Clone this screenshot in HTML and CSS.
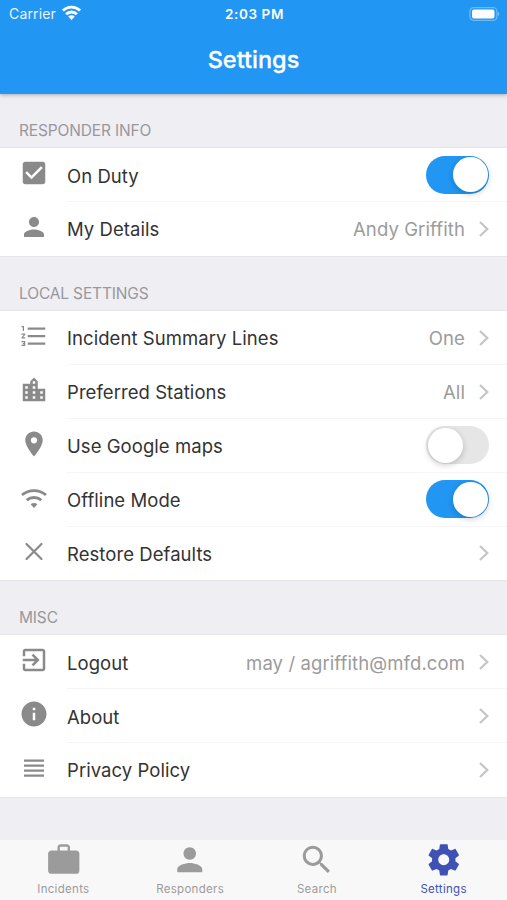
FILE: index.html
```html
<!DOCTYPE html>
<html lang="en">
<head>
<meta charset="utf-8">
<title>Settings</title>
<link rel="stylesheet" href="styles.css">
</head>
<body>
<svg width="0" height="0" class="defs">
  <symbol id="chevron" viewBox="0 0 10 16"><path d="M1 1l7.300 7L1 15" fill="none" stroke="currentColor" stroke-width="2.200"/></symbol>
  <symbol id="person" viewBox="0 0 24 24"><path d="M12 12c2.210 0 4-1.790 4-4s-1.790-4-4-4-4 1.790-4 4 1.790 4 4 4zm0 2c-2.670 0-8 1.340-8 4v2h16v-2c0-2.660-5.330-4-8-4z"/></symbol>
</svg>
<header class="header">
  <div class="status">
    <div class="carrier"><span>Carrier</span>
      <svg class="signal" viewBox="0 0 18 14"><g fill="none" stroke="#fff" stroke-width="2.700"><path d="M.9 5.200a11.500 11.500 0 0 1 16.200 0"/><path d="M3.900 8.600a7.200 7.200 0 0 1 10.200 0"/></g><path d="M5.900 10.900a4.300 4.300 0 0 1 6.200 0L9 14z" fill="#fff"/></svg>
    </div>
    <div class="clock">2:03 PM</div>
    <svg class="battery" viewBox="0 0 31 14"><rect x=".9" y=".6" width="27" height="12.800" rx="3.800" fill="none" stroke="#fff" stroke-opacity=".35" stroke-width="1.200"/><rect x="3" y="2.500" width="22.500" height="9" rx="2" fill="#fff"/><path d="M28.800 5v4c2-.7 2-3.300 0-4z" fill="#fff" fill-opacity=".4"/></svg>
  </div>
  <h1 class="title">Settings</h1>
</header>
<main class="content">
  <h2 class="heading">RESPONDER INFO</h2>
  <section class="group">
    <div class="row"><svg class="icon" viewBox="0 0 24 24"><path d="M19 3H5c-1.110 0-2 .9-2 2v14c0 1.100.89 2 2 2h14c1.110 0 2-.9 2-2V5c0-1.100-.89-2-2-2zm-9 14l-5-5 1.410-1.410L10 14.170l7.590-7.590L19 8l-9 9z"/></svg>
      <div class="body"><span class="label">On Duty</span><span class="toggle on"><i class="knob"></i></span></div></div>
    <div class="row"><svg class="icon"><use href="#person"/></svg>
      <div class="body"><span class="label">My Details</span><span class="value">Andy Griffith</span><svg class="chev"><use href="#chevron"/></svg></div></div>
  </section>
  <h2 class="heading local">LOCAL SETTINGS</h2>
  <section class="group">
    <div class="row"><svg class="icon" viewBox="0 0 24 24"><path d="M2 17h2v.5H3v1h1v.5H2v1h3v-4H2v1zm1-9h1V4H2v1h1v3zm-1 3h1.800L2 13.100v.9h3v-1H3.200L5 10.900V10H2v1zm5-5.900v1.800h14V5.100H7zm0 13.800h14v-1.800H7v1.800zm0-6h14v-1.800H7v1.800z"/></svg>
      <div class="body"><span class="label">Incident Summary Lines</span><span class="value">One</span><svg class="chev"><use href="#chevron"/></svg></div></div>
    <div class="row"><svg class="icon" viewBox="0 0 24 24"><path d="M15 11V5l-3-3-3 3v2H3v14h18V11h-6zm-8 8H5v-2h2v2zm0-4H5v-2h2v2zm0-4H5V9h2v2zm6 8h-2v-2h2v2zm0-4h-2v-2h2v2zm0-4h-2V9h2v2zm0-4h-2V5h2v2zm6 12h-2v-2h2v2zm0-4h-2v-2h2v2z"/></svg>
      <div class="body"><span class="label">Preferred Stations</span><span class="value">All</span><svg class="chev"><use href="#chevron"/></svg></div></div>
    <div class="row"><svg class="icon" viewBox="0 0 24 24"><path d="M12 2C8.130 2 5 5.130 5 9c0 5.250 7 13 7 13s7-7.750 7-13c0-3.870-3.130-7-7-7zm0 9.500a2.500 2.500 0 0 1 0-5 2.500 2.500 0 0 1 0 5z"/></svg>
      <div class="body"><span class="label">Use Google maps</span><span class="toggle"><i class="knob"></i></span></div></div>
    <div class="row"><svg class="icon" viewBox="0 0 30 30"><g fill="none" stroke="currentColor" stroke-width="2.900"><path d="M3 12a18.500 18.500 0 0 1 24 0"/><path d="M7.700 17.100a11.600 11.600 0 0 1 14.600 0"/></g><path d="M11.600 21.300c2-1.600 4.800-1.600 6.800 0L15 24.900z"/></svg>
      <div class="body"><span class="label">Offline Mode</span><span class="toggle on"><i class="knob"></i></span></div></div>
    <div class="row"><svg class="icon" viewBox="0 0 30 30"><path d="M7.500 8l15 15M22.500 8l-15 15" fill="none" stroke="currentColor" stroke-width="2.200" stroke-linecap="round"/></svg>
      <div class="body"><span class="label">Restore Defaults</span><svg class="chev"><use href="#chevron"/></svg></div></div>
  </section>
  <h2 class="heading misc">MISC</h2>
  <section class="group">
    <div class="row"><svg class="icon" viewBox="0 0 24 24"><path d="M10.090 15.590L11.500 17l5-5-5-5-1.410 1.410L12.670 11H3v2h9.670l-2.580 2.590zM19 3H5c-1.110 0-2 .9-2 2v4h2V5h14v14H5v-4H3v4c0 1.100.89 2 2 2h14c1.100 0 2-.9 2-2V5c0-1.100-.9-2-2-2z"/></svg>
      <div class="body"><span class="label">Logout</span><span class="value">may / agriffith@mfd.com</span><svg class="chev"><use href="#chevron"/></svg></div></div>
    <div class="row"><svg class="icon" viewBox="0 0 24 24"><path d="M12 2C6.480 2 2 6.480 2 12s4.480 10 10 10 10-4.480 10-10S17.520 2 12 2zm1 15h-2v-6h2v6zm0-8h-2V7h2v2z"/></svg>
      <div class="body"><span class="label">About</span><svg class="chev"><use href="#chevron"/></svg></div></div>
    <div class="row"><svg class="icon" viewBox="0 0 24 24"><path d="M4 14.900h16v-1.800H4v1.800zm0 4h16v-1.800H4v1.800zm0-8h16V9.100H4v1.800zm0-5.800v1.800h16V5.100H4z"/></svg>
      <div class="body"><span class="label">Privacy Policy</span><svg class="chev"><use href="#chevron"/></svg></div></div>
  </section>
</main>
<nav class="tabs">
  <div class="tab"><svg class="tab-icon" viewBox="0 0 24 24"><path d="M20 6h-4V4c0-1.110-.89-2-2-2h-4c-1.110 0-2 .89-2 2v2H4c-1.110 0-1.990.89-1.990 2L2 19c0 1.110.89 2 2 2h16c1.110 0 2-.89 2-2V8c0-1.110-.89-2-2-2zm-5.500 0h-5V3.700h5V6z"/></svg><span>Incidents</span></div>
  <div class="tab"><svg class="tab-icon"><use href="#person"/></svg><span>Responders</span></div>
  <div class="tab"><svg class="tab-icon" viewBox="0 0 24 24"><path d="M15.500 14h-.79l-.28-.27A6.471 6.471 0 0 0 16 9.500 6.500 6.500 0 1 0 9.500 16c1.610 0 3.090-.59 4.230-1.570l.27.28v.79l5 4.990L20.490 19l-4.990-5zm-6 0C7.010 14 5 11.990 5 9.500S7.010 5 9.500 5 14 7.010 14 9.500 11.990 14 9.500 14z"/></svg><span>Search</span></div>
  <div class="tab active"><svg class="tab-icon" viewBox="0 0 24 24"><path d="M19.430 12.980c.04-.32.07-.64.07-.98s-.03-.66-.07-.98l2.110-1.650c.19-.15.24-.42.12-.64l-2-3.460c-.12-.22-.39-.3-.61-.22l-2.490 1c-.52-.4-1.080-.73-1.690-.98l-.38-2.650A.488.488 0 0 0 14 2h-4c-.25 0-.46.18-.49.42l-.38 2.650c-.61.25-1.170.59-1.690.98l-2.490-1c-.23-.09-.49 0-.61.22l-2 3.460c-.13.22-.07.49.12.64l2.110 1.650c-.04.32-.07.65-.07.98s.03.66.07.98l-2.110 1.650c-.19.15-.24.42-.12.64l2 3.460c.12.22.39.3.61.22l2.490-1c.52.4 1.080.73 1.690.98l.38 2.650c.03.24.24.42.49.42h4c.25 0 .46-.18.49-.42l.38-2.650c.61-.25 1.170-.59 1.690-.98l2.490 1c.23.09.49 0 .61-.22l2-3.460c.12-.22.07-.49-.12-.64l-2.110-1.650zM12 15.500c-1.930 0-3.500-1.570-3.500-3.500s1.570-3.500 3.500-3.500 3.500 1.570 3.500 3.500-1.570 3.500-3.500 3.500z"/></svg><span>Settings</span></div>
</nav>
</body>
</html>
```
FILE: styles.css
```css
* { box-sizing: border-box; }
body {
  margin: 0;
  height: 900px;
  display: flex;
  flex-direction: column;
  overflow: hidden;
  background: #efeef3;
  font-family: Inter, "Liberation Sans", sans-serif;
}
.defs { position: absolute; }
.header {
  height: 94px;
  flex: none;
  background: #2196f3;
  color: #fff;
  box-shadow: 0 1px 4px rgba(0, 0, 0, .3);
}
.status {
  height: 27px;
  padding: 0 7px 0 9px;
  display: grid;
  grid-template-columns: 1fr auto 1fr;
  align-items: center;
}
.carrier { display: flex; align-items: center; gap: 6px; font-size: 14px; letter-spacing: .15px; }
.carrier span { opacity: .9; }
.signal { width: 19px; height: 15px; margin-top: -2px; }
.clock { font-size: 13.500px; font-weight: 600; letter-spacing: .6px; }
.battery { width: 31px; height: 14px; justify-self: end; }
.title {
  margin: 0;
  height: 66px;
  line-height: 66px;
  text-align: center;
  font-size: 23.500px;
  font-weight: 500;
  -webkit-text-stroke: .3px currentColor;
}
.content { flex: 1; }
.heading {
  margin: 0;
  height: 54px;
  padding: 28px 0 0 19px;
  font-size: 15.500px;
  line-height: 18px;
  font-weight: 400;
  letter-spacing: -.15px;
  color: #98989c;
}
.local, .misc { height: 55px; padding-top: 29px; }
.group { background: #fff; box-shadow: 0 0 1px 1px #e6e5e9; }
.row { height: 54px; display: flex; align-items: center; padding-left: 19px; }
.row:last-child { height: 53.500px; }
.icon { width: 30px; height: 30px; margin-right: 18px; margin-top: -4px; color: #8a8a8a; fill: currentColor; flex: none; }
.body {
  flex: 1;
  height: 100%;
  padding: 1px 18px 0 0;
  display: flex;
  align-items: center;
  border-bottom: 1px solid #f5f5f6;
}
.row:last-child .body { border-bottom-color: transparent; }
.label, .value { padding-top: 1px; font-size: 18.500px; white-space: nowrap; }
.label { margin-right: auto; color: #333; letter-spacing: .06px; }
.value { color: #9b9b9b; letter-spacing: .1px; }
.chev { width: 10px; height: 16px; margin-left: 14px; color: #c5c5c7; }
.toggle { width: 63px; height: 38px; margin-top: -1px; padding: 1.500px; border-radius: 19px; background: #e6e6e6; display: flex; }
.toggle.on { background: #2196f3; justify-content: flex-end; }
.knob { width: 35px; height: 35px; border-radius: 50%; background: #fff; box-shadow: 0 2px 6px rgba(0, 0, 0, .2); }
.tabs { height: 61px; flex: none; display: grid; grid-template-columns: repeat(4, 1fr); background: #f8f8f8; border-top: 1px solid #f0f0f2; }
.tab { display: flex; flex-direction: column; align-items: center; color: #9b9b9b; font-size: 11.500px; line-height: 14px; letter-spacing: .3px; }
.tab-icon { width: 37.500px; height: 37.500px; margin-top: 1px; margin-bottom: 3px; fill: currentColor; }
.active { color: #3f51b5; }
```
